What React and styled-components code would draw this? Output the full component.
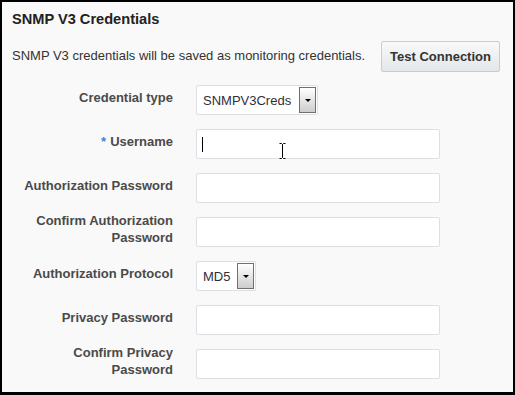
import styled, { createGlobalStyle } from "styled-components";

const GlobalStyle = createGlobalStyle`
  html, body {
    margin: 0;
    padding: 0;
    background: #fff;
  }
  body {
    font-family: "Liberation Sans", Arial, sans-serif;
  }
`;

const Frame = styled.div`
  box-sizing: border-box;
  width: 515px;
  height: 395px;
  border: 2px solid #000;
  border-bottom-width: 3px;
  background: #f9f9f9;
  padding: 8px 13px 0 10px;
  overflow: hidden;
`;

const Title = styled.h2`
  margin: 0;
  font-size: 14.6px;
  line-height: 18px;
  font-weight: bold;
  color: #222;
`;

const IntroRow = styled.div`
  margin-top: 13px;
  display: flex;
  align-items: center;
  justify-content: space-between;
`;

const IntroText = styled.span`
  font-size: 13px;
  line-height: 16px;
  color: #333;
  padding-bottom: 2px;
`;

const Button = styled.button`
  box-sizing: border-box;
  height: 31px;
  width: 119px;
  padding: 0;
  border: 1px solid #c6cdd3;
  border-radius: 2px;
  background: linear-gradient(#f8f9fa, #e3e7ea);
  font-family: inherit;
  font-size: 13px;
  font-weight: bold;
  color: #333;
`;

const Form = styled.div`
  margin-top: 13px;
  display: flex;
  flex-direction: column;
  gap: 14px;
`;

const Row = styled.div`
  display: flex;
  align-items: center;
  height: 30px;
`;

const Label = styled.label`
  width: 150px;
  margin: -6px 23px 0 11px;
  text-align: right;
  font-size: 13px;
  line-height: 17px;
  font-weight: bold;
  color: #4a4a4a;
`;

const Required = styled.span`
  color: #3a86d6;
  margin-right: 4px;
`;

const TextBox = styled.div`
  position: relative;
  box-sizing: border-box;
  width: 244px;
  height: 30px;
  background: #fff;
  border: 1px solid #dce0e4;
  border-radius: 2px;
`;

const Caret = styled.span`
  position: absolute;
  left: 5px;
  top: 7px;
  width: 1px;
  height: 15px;
  background: #000;
`;

const Pointer = styled.svg`
  position: absolute;
  left: 81px;
  top: 12px;
`;

const SelectBox = styled.div`
  box-sizing: border-box;
  display: flex;
  align-items: stretch;
  width: ${(p) => p.$width}px;
  height: 30px;
  padding: 1px;
  background: #fff;
  border: 1px solid #dce0e4;
  border-radius: 2px;
`;

const SelectValue = styled.span`
  flex: 1;
  display: flex;
  align-items: center;
  padding-left: 5px;
  font-size: 13px;
  color: #2f2f3a;
`;

const DropButton = styled.span`
  box-sizing: border-box;
  width: 17px;
  display: flex;
  align-items: center;
  justify-content: center;
  border: 1px solid #6f6f6f;
  background: linear-gradient(#ffffff, #cdcdcd);

  &::after {
    content: "";
    border-left: 3px solid transparent;
    border-right: 3px solid transparent;
    border-top: 3px solid #000;
  }
`;

const Select = ({ value, width }) => (
  <SelectBox $width={width}>
    <SelectValue>{value}</SelectValue>
    <DropButton />
  </SelectBox>
);

const IBeam = () => (
  <Pointer width="9" height="18" viewBox="0 0 9 18">
    <path
      d="M1.5 1.5H3.5L4.5 2.5L5.5 1.5H7.5M4.5 2.5V15.5M1.5 16.5H3.5L4.5 15.5L5.5 16.5H7.5"
      fill="none"
      stroke="#fff"
      strokeWidth="2.5"
    />
    <path
      d="M1.5 1.5H3.5L4.5 2.5L5.5 1.5H7.5M4.5 2.5V15.5M1.5 16.5H3.5L4.5 15.5L5.5 16.5H7.5"
      fill="none"
      stroke="#000"
      strokeWidth="1"
    />
  </Pointer>
);

const App = () => {
  return (
    <>
      <GlobalStyle />
      <Frame>
        <Title>SNMP V3 Credentials</Title>
        <IntroRow>
          <IntroText>
            SNMP V3 credentials will be saved as monitoring credentials.
          </IntroText>
          <Button>Test Connection</Button>
        </IntroRow>
        <Form>
          <Row>
            <Label>Credential type</Label>
            <Select value="SNMPV3Creds" width={122} />
          </Row>
          <Row>
            <Label>
              <Required>*</Required>Username
            </Label>
            <TextBox>
              <Caret />
              <IBeam />
            </TextBox>
          </Row>
          <Row>
            <Label>Authorization Password</Label>
            <TextBox />
          </Row>
          <Row>
            <Label>Confirm Authorization Password</Label>
            <TextBox />
          </Row>
          <Row>
            <Label>Authorization Protocol</Label>
            <Select value="MD5" width={60} />
          </Row>
          <Row>
            <Label>Privacy Password</Label>
            <TextBox />
          </Row>
          <Row>
            <Label>Confirm Privacy Password</Label>
            <TextBox />
          </Row>
        </Form>
      </Frame>
    </>
  );
};

export default App;
